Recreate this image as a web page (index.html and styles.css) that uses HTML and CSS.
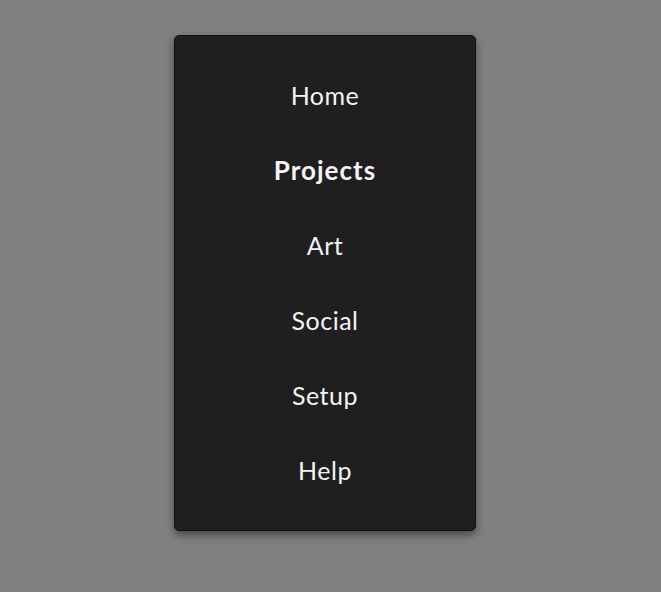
FILE: index.html
```html
<!DOCTYPE html>
<html lang="en">
<head>
  <meta charset="UTF-8" />
  <meta name="viewport" content="width=device-width, initial-scale=1" />
  <title>Menu</title>
  <link rel="stylesheet" href="styles.css">
</head>
<body>
  <div class="page">
    <nav class="menu">
      <a class="menu-item" href="#">Home</a>
      <a class="menu-item active" href="#">Projects</a>
      <a class="menu-item" href="#">Art</a>
      <a class="menu-item" href="#">Social</a>
      <a class="menu-item" href="#">Setup</a>
      <a class="menu-item" href="#">Help</a>
    </nav>
  </div>
</body>
</html>
```

FILE: styles.css
```css
:root {
  --bg: #808080;
  --card: #1f1f1f;
  --text: #f4f4f4;
}

* {
  box-sizing: border-box;
  margin: 0;
  padding: 0;
}

body {
  font-family: 'Lato', 'Open Sans', sans-serif;
  background: var(--bg);
  color: var(--text);
  height: 100vh;
}

.page {
  padding: 35px 0 0 174px;
}

.menu {
  width: 302px;
  padding: 21px 0 23px;
  display: flex;
  flex-direction: column;
  background: var(--card);
  border: 1px solid #111;
  border-radius: 5px;
  box-shadow: 0 4px 8px rgba(0, 0, 0, 0.45);
}

.menu-item {
  height: 75px;
  display: flex;
  align-items: center;
  justify-content: center;
  font-size: 25px;
  letter-spacing: 0.5px;
  color: var(--text);
  text-decoration: none;
}

.menu-item.active {
  font-size: 26px;
  font-weight: 700;
  letter-spacing: 1px;
}
```
